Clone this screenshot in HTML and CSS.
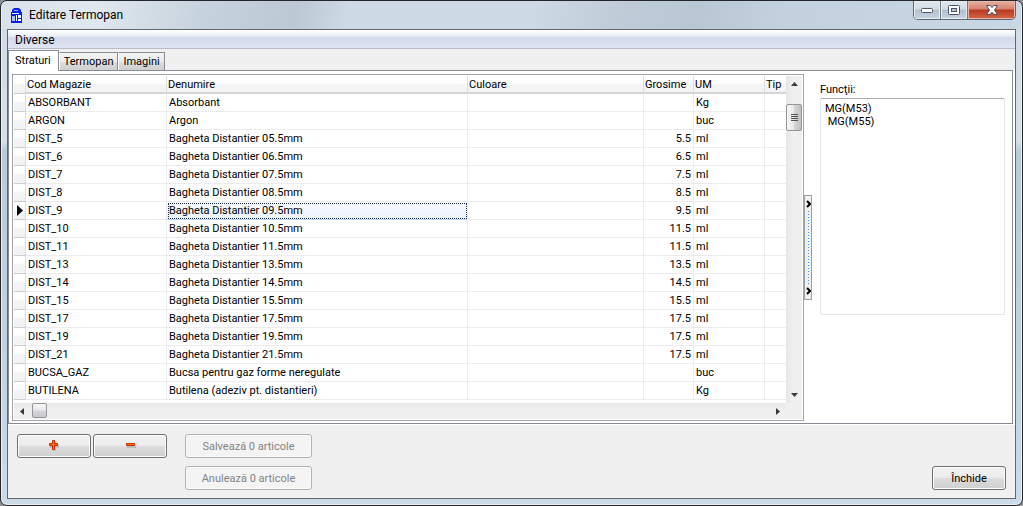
FILE: index.html
```html
<!DOCTYPE html>
<html lang="ro">
<head>
<meta charset="utf-8">
<title>Editare Termopan</title>
<link rel="stylesheet" href="styles.css">
</head>
<body>
<div class="window">
  <header class="titlebar">
    <svg class="app-icon" viewBox="0 0 11 15" width="11" height="15" aria-hidden="true">
      <path d="M1 4V2L3 0h5l2 2v2h1v11H0V4z" fill="#0a1fe8"/>
      <path d="M3 2h4v1H3z" fill="#9db4ff"/>
      <path d="M1 5h7v1H1z" fill="#dfe8ff"/>
      <path d="M1 8h3v5H1z" fill="#a9c0ff"/>
      <path d="M5 7h1v6H5zM7 7h3v3H7zM7 11h3v2H7z" fill="#f2f6ff"/>
    </svg>
    <h1 class="title">Editare Termopan</h1>
    <div class="window-buttons">
      <button class="wb" aria-label="Minimizare"><svg width="14" height="8" viewBox="0 0 14 8"><rect x="1.5" y="2.5" width="11" height="4" rx="1" fill="#fff" stroke="#4c5567"/></svg></button>
      <button class="wb" aria-label="Maximizare"><svg width="14" height="12" viewBox="0 0 14 12"><rect x="1.5" y="1.5" width="11" height="9" rx="1" fill="#fff" stroke="#4c5567"/><rect x="4.500" y="4.500" width="5" height="3" fill="#b5c3d2" stroke="#4c5567"/></svg></button>
      <button class="wb wb-close" aria-label="Închidere fereastră"><svg width="14" height="12" viewBox="0 0 14 12"><path d="M1.500 1.500H5L7 3.600 9 1.500h3.500L9.500 6l3 4.500H9L7 8.300 5 10.500H1.500l3-4.500z" fill="#fff" stroke="#4e4a5c"/></svg></button>
    </div>
  </header>
  <main class="client">
    <nav class="menubar"><button class="menu-item">Diverse</button></nav>
    <div class="tabs" role="tablist">
      <button class="tab tab-active" role="tab" aria-selected="true">Straturi</button>
      <button class="tab" role="tab" aria-selected="false">Termopan</button>
      <button class="tab" role="tab" aria-selected="false">Imagini</button>
    </div>
    <div class="page-frame">
      <section class="page" role="tabpanel">
        <div class="grid-box">
          <div class="table-wrap">
            <table class="grid">
              <colgroup><col class="c-ind"><col class="c-cod"><col class="c-den"><col class="c-cul"><col class="c-gro"><col class="c-um"><col></colgroup>
              <thead><tr><th class="ind"></th><th>Cod Magazie</th><th>Denumire</th><th>Culoare</th><th>Grosime</th><th>UM</th><th>Tip</th></tr></thead>
              <tbody>
                <tr><td class="ind"></td><td>ABSORBANT</td><td>Absorbant</td><td></td><td class="num"></td><td>Kg</td><td></td></tr>
                <tr><td class="ind"></td><td>ARGON</td><td>Argon</td><td></td><td class="num"></td><td>buc</td><td></td></tr>
                <tr><td class="ind"></td><td>DIST_5</td><td>Bagheta Distantier 05.5mm</td><td></td><td class="num">5.5</td><td>ml</td><td></td></tr>
                <tr><td class="ind"></td><td>DIST_6</td><td>Bagheta Distantier 06.5mm</td><td></td><td class="num">6.5</td><td>ml</td><td></td></tr>
                <tr><td class="ind"></td><td>DIST_7</td><td>Bagheta Distantier 07.5mm</td><td></td><td class="num">7.5</td><td>ml</td><td></td></tr>
                <tr><td class="ind"></td><td>DIST_8</td><td>Bagheta Distantier 08.5mm</td><td></td><td class="num">8.5</td><td>ml</td><td></td></tr>
                <tr><td class="ind ind-current"><svg class="marker" width="6" height="11" viewBox="0 0 6 11"><path d="M0 0l6 5.500L0 11z"/></svg></td><td>DIST_9</td><td class="focused">Bagheta Distantier 09.5mm</td><td></td><td class="num">9.5</td><td>ml</td><td></td></tr>
                <tr><td class="ind"></td><td>DIST_10</td><td>Bagheta Distantier 10.5mm</td><td></td><td class="num">11.5</td><td>ml</td><td></td></tr>
                <tr><td class="ind"></td><td>DIST_11</td><td>Bagheta Distantier 11.5mm</td><td></td><td class="num">11.5</td><td>ml</td><td></td></tr>
                <tr><td class="ind"></td><td>DIST_13</td><td>Bagheta Distantier 13.5mm</td><td></td><td class="num">13.5</td><td>ml</td><td></td></tr>
                <tr><td class="ind"></td><td>DIST_14</td><td>Bagheta Distantier 14.5mm</td><td></td><td class="num">14.5</td><td>ml</td><td></td></tr>
                <tr><td class="ind"></td><td>DIST_15</td><td>Bagheta Distantier 15.5mm</td><td></td><td class="num">15.5</td><td>ml</td><td></td></tr>
                <tr><td class="ind"></td><td>DIST_17</td><td>Bagheta Distantier 17.5mm</td><td></td><td class="num">17.5</td><td>ml</td><td></td></tr>
                <tr><td class="ind"></td><td>DIST_19</td><td>Bagheta Distantier 19.5mm</td><td></td><td class="num">17.5</td><td>ml</td><td></td></tr>
                <tr><td class="ind"></td><td>DIST_21</td><td>Bagheta Distantier 21.5mm</td><td></td><td class="num">17.5</td><td>ml</td><td></td></tr>
                <tr><td class="ind"></td><td>BUCSA_GAZ</td><td>Bucsa pentru gaz forme neregulate</td><td></td><td class="num"></td><td>buc</td><td></td></tr>
                <tr><td class="ind"></td><td>BUTILENA</td><td>Butilena (adeziv pt. distantieri)</td><td></td><td class="num"></td><td>Kg</td><td></td></tr>
              </tbody>
            </table>
          </div>
          <div class="vscroll">
            <button class="arrow" aria-label="Sus"><svg width="7" height="4" viewBox="0 0 7 4"><path d="M0 4l3.500-4L7 4z"/></svg></button>
            <div class="vthumb"><i></i><i></i><i></i><i></i></div>
            <button class="arrow arrow-end" aria-label="Jos"><svg width="7" height="4" viewBox="0 0 7 4"><path d="M0 0h7L3.500 4z"/></svg></button>
          </div>
          <div class="hscroll">
            <button class="arrow" aria-label="Stânga"><svg width="4" height="7" viewBox="0 0 4 7"><path d="M4 0v7L0 3.500z"/></svg></button>
            <div class="hthumb"></div>
            <button class="arrow arrow-right" aria-label="Dreapta"><svg width="4" height="7" viewBox="0 0 4 7"><path d="M0 0l4 3.500L0 7z"/></svg></button>
          </div>
          <div class="corner"></div>
        </div>
        <button class="splitter" aria-label="Ascunde panoul">
          <svg width="5" height="8" viewBox="0 0 5 8"><path d="M1 1l3 3-3 3"/></svg>
          <span class="dots"></span>
          <svg width="5" height="8" viewBox="0 0 5 8"><path d="M1 1l3 3-3 3"/></svg>
        </button>
        <div class="side">
          <label class="side-label" for="functii">Funcţii:</label>
          <textarea class="memo" id="functii" spellcheck="false">MG(M53)
 MG(M55)</textarea>
        </div>
      </section>
    </div>
    <footer class="footer">
      <div class="actions">
        <button class="btn" aria-label="Adaugă"><svg width="13" height="14" viewBox="0 0 13 14"><path d="M5 2h3v3h3v4H8v3H5V9H2V5h3z" fill="#a8a8a8" opacity=".6"/><path d="M4.500 1.500h2v3h3v2h-3v4h-2v-4h-3v-2h3z" fill="#ff7a00" stroke="#c92a00"/></svg></button>
        <button class="btn" aria-label="Șterge"><svg width="13" height="14" viewBox="0 0 13 14"><path d="M3 5h9v4H3z" fill="#a8a8a8" opacity=".6"/><path d="M2.500 4.500h8v2h-8z" fill="#ff7a00" stroke="#c92a00"/></svg></button>
        <button class="btn" disabled>Salvează 0 articole</button>
        <button class="btn btn-cancel" disabled>Anulează 0 articole</button>
      </div>
      <button class="btn btn-close">Închide</button>
    </footer>
  </main>
</div>
</body>
</html>
```

FILE: styles.css
```css
* { box-sizing: border-box; }

body {
  margin: 0;
  background: #8d9095;
  color: #000;
  font: 11px/13px Roboto, Tahoma, "Noto Sans", sans-serif;
}

button, textarea { font: inherit; color: inherit; margin: 0; }
button { padding: 0; }

.window {
  display: flex;
  flex-direction: column;
  height: 100vh;
  padding: 0 6px 6px;
  border: 1px solid #24262c;
  border-radius: 7px;
  background: linear-gradient(#cfdbe7 0, #d6e0ea 140px, #b9cad9 150px, #c3d3e2 75%, #cddbe9);
  box-shadow: inset 0 0 0 1px #eaf1f8;
}

/* Title bar */
.titlebar {
  display: flex;
  align-items: center;
  height: 28px;
  flex: none;
  margin: 0 -5px;
  padding-left: 9px;
  background: linear-gradient(100deg, #d9e2eb 0, #e0e8ef 9%, #c6d2dd 20%, #bcc8d3 29%, #cdd9e5 34%, #cddae6 52%, #c0cdd9 60%, #b9c7d4 68%, #c3d1de 76%, #cad8e6);
  border-radius: 6px 6px 0 0;
}
.app-icon { flex: none; }
.title {
  flex: 1;
  margin: 0 0 0 7px;
  font: 12px/16px Roboto, "Noto Sans", sans-serif;
}
.window-buttons {
  display: flex;
  align-self: flex-start;
  margin-right: 5px;
  border: 1px solid #5d6673;
  border-top: 0;
  border-radius: 0 0 5px 5px;
  overflow: hidden;
}
.wb {
  display: flex;
  align-items: center;
  justify-content: center;
  width: 27px;
  height: 18px;
  border: 0;
  border-right: 1px solid #6d7784;
  background: linear-gradient(#dfe6ed 0, #d3dce5 45%, #b2c0ce 50%, #c7d5e1);
  box-shadow: inset 0 0 0 1px #e8eef4;
}
.wb-close {
  width: 47px;
  border-right: 0;
  background: linear-gradient(#e6b0a2 0, #d6826f 45%, #b93a20 50%, #d4664a);
  box-shadow: inset 0 0 0 1px #e9b6a8;
}

/* Client area */
.client {
  flex: 1;
  display: flex;
  flex-direction: column;
  min-height: 0;
  border: 1px solid #62676e;
  background: #f0f0f0;
}
.menubar {
  height: 19px;
  flex: none;
  border-bottom: 1px solid #b6bccc;
  background: linear-gradient(#fff 0, #e9edf5 35%, #d4daed 40%, #e0e5f4);
}
.menu-item { height: 20px; border: 0; padding: 0 7px; background: none; font-size: 12px; }

.tabs { display: flex; align-items: flex-end; flex: none; height: 21px; }
.tab {
  height: 18px;
  padding: 0 4px;
  border: 1px solid #898c95;
  border-bottom: 0;
  border-left-color: #fff;
  background: linear-gradient(#f3f3f3 0, #ebebeb 50%, #dcdcdc 55%, #cfcfcf);
}
.tab-active {
  position: relative;
  z-index: 1;
  height: 21px;
  padding: 0 7px 2px 6px;
  margin-bottom: -1px;
  border-left-color: #898c95;
  background: #fff;
}

.page-frame { flex: 1; display: flex; min-height: 0; padding: 0 2px 1px 0; background: #fff; }
.page {
  flex: 1;
  display: flex;
  min-width: 0;
  padding: 3px 7px 2px 3px;
  border: 1px solid #898c95;
}

/* Data grid */
.grid-box {
  flex: 1;
  display: grid;
  grid-template-columns: minmax(0, 1fr) 16px;
  grid-template-rows: minmax(0, 1fr) 16px;
  min-width: 0;
  padding: 1px;
  border: 1px solid #a0a3a8;
}
.table-wrap { overflow: hidden; }
.grid { width: 100%; table-layout: fixed; border-collapse: separate; border-spacing: 0; }
.c-ind { width: 12px; }
.c-cod { width: 141px; }
.c-den { width: 301px; }
.c-cul { width: 176px; }
.c-gro { width: 50px; }
.c-um { width: 71px; }
.grid th, .grid td {
  height: 18px;
  padding: 0 2px;
  white-space: nowrap;
  overflow: hidden;
  text-align: left;
  font-weight: normal;
  border-right: 1px solid #ececec;
  border-bottom: 1px solid #ececec;
}
.grid th {
  padding: 0 1px;
  border-right-color: #dcdfe2;
  border-bottom: 2px solid #d5d5d5;
  background: linear-gradient(#fff 0, #fff 45%, #f5f6f8 50%, #f2f3f5);
}
.grid th:last-child, .grid td:last-child { border-right: 0; }
.grid .num { text-align: right; }
.grid .ind {
  padding: 0;
  border-right-color: #dcdfe2;
  border-bottom: 1px solid #cfcfcf;
  background: linear-gradient(#fff 0, #fff 40%, #f4f5f7 50%, #f0f1f3);
}
.grid .ind-current { padding-left: 3px; }
.marker { display: block; }
.grid .focused {
  background: linear-gradient(#f8fbff, #eaf2fd);
  outline: 1px dotted #1c2e4c;
  outline-offset: -2px;
  border-bottom-color: #b8d6fb;
}

/* Scroll bars */
.vscroll { display: flex; flex-direction: column; background: linear-gradient(90deg, #e6e6e6, #f0f0f0 40%); }
.hscroll { display: flex; background: linear-gradient(#e6e6e6, #f0f0f0 40%); }
.corner { background: #f0f0f0; }
.arrow {
  display: flex;
  align-items: center;
  justify-content: center;
  width: 16px;
  height: 16px;
  border: 0;
  background: none;
}
.arrow-end { margin-top: auto; }
.arrow-right { margin-left: auto; }
.arrow path { fill: #3a3a3a; }
.vthumb {
  display: flex;
  flex-direction: column;
  align-items: center;
  justify-content: center;
  gap: 1px;
  height: 27px;
  margin-top: 12px;
  border: 1px solid #959595;
  border-radius: 2px;
  background: linear-gradient(90deg, #f6f6f6 0, #e9e9eb 48%, #d6d6d8 52%, #bfc0c4);
}
.vthumb i { width: 7px; height: 1px; background: #555; }
.hthumb {
  width: 15px;
  height: 15px;
  margin-left: 2px;
  border: 1px solid #959595;
  border-radius: 2px;
  background: linear-gradient(#f6f6f6 0, #e9e9eb 48%, #d6d6d8 52%, #c8c9cc);
}

/* Side panel */
.splitter {
  align-self: center;
  display: flex;
  flex-direction: column;
  align-items: center;
  width: 8px;
  height: 105px;
  padding: 4px 0;
  border: 1px solid #a0a0a0;
  background: #f0f0f0;
}
.splitter path { fill: none; stroke: #000; stroke-width: 2; }
.dots {
  flex: 1;
  width: 1px;
  margin: 3px 0;
  background: repeating-linear-gradient(#3399ff 0 1px, transparent 1px 3px);
}
.side { display: flex; flex-direction: column; width: 193px; padding: 9px 0 0 8px; }
.side-label { margin-bottom: 2px; }
.memo {
  height: 217px;
  padding: 3px 4px;
  border: 1px solid #dfe3ea;
  border-top-color: #abadb3;
  border-radius: 2px;
  resize: none;
  outline: none;
  overflow: hidden;
  background: #fff;
}

/* Footer */
.footer {
  flex: none;
  display: flex;
  align-items: flex-end;
  justify-content: space-between;
  padding: 9px 9px 8px;
}
.actions { display: grid; grid-template-columns: 74px 90px 127px; gap: 8px 2px; }
.actions .btn:nth-child(2) { margin-right: 16px; }
.btn-cancel { grid-column: 3; }
.btn {
  display: flex;
  align-items: center;
  justify-content: center;
  height: 24px;
  border: 1px solid #707070;
  border-radius: 3px;
  background: linear-gradient(#f2f2f2 0, #ebebeb 50%, #dddddd 50%, #cfcfcf);
  box-shadow: inset 0 0 0 1px #fbfbfb;
}
.btn:disabled { border-color: #adb2b5; background: #f4f4f4; color: #838383; }
.btn-close { width: 74px; }
```
